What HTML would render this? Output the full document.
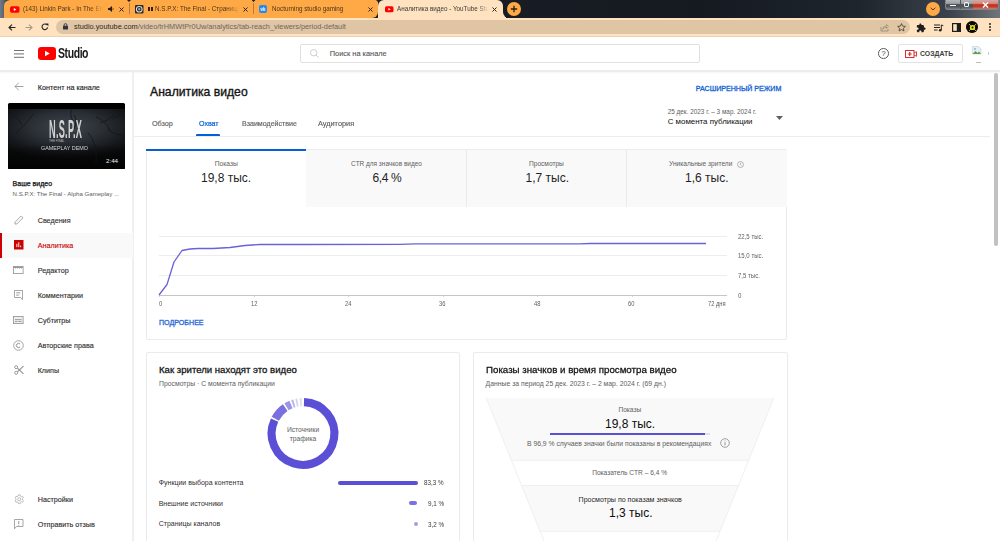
<!DOCTYPE html>
<html><head><meta charset="utf-8">
<style>
*{box-sizing:border-box;margin:0;padding:0}
html,body{width:1000px;height:541px;overflow:hidden;background:#fff;font-family:"Liberation Sans",sans-serif;color:#0d0d0d}
.a{position:absolute}
.t{position:absolute;white-space:nowrap;line-height:1}
svg{position:absolute;overflow:visible}
.tabt{position:absolute;top:4px;font-size:7.2px;color:#4a3518;white-space:nowrap;line-height:9px;height:11px;overflow:hidden;transform:scaleX(.875);transform-origin:0 0}
.nav{position:absolute;left:37.7px;font-size:7.2px;font-weight:normal;color:#2e2e2e;-webkit-text-stroke:.12px #2e2e2e;white-space:nowrap;line-height:1}
.card{position:absolute;background:#fff;border:1px solid #ebebeb;border-radius:2px}
.g{color:#606060}
</style></head><body>
<!-- ============ TAB STRIP ============ -->
<div class="a" style="left:0;top:0;width:1000px;height:18px;background:linear-gradient(90deg,#6f7884 0px,#5a636e 4px,#252b33 8px,#1b2028 300px,#151a21 700px,#1f252d 860px,#3b424b 950px,#6f757c 1000px)"></div>
<div class="a" style="left:4px;top:0;width:374px;height:18px;background:#fea946;border-radius:6px 0 6px 0"></div>
<!-- separators / notches -->
<div class="a" style="left:128.5px;top:3px;width:1px;height:11px;background:#b87a35"></div>
<div class="a" style="left:253px;top:3px;width:1px;height:11px;background:#b87a35"></div>
<div class="a" style="left:127px;top:0;width:4px;height:2px;background:#1b2028;clip-path:polygon(0 0,100% 0,50% 100%)"></div>
<div class="a" style="left:251.5px;top:0;width:4px;height:2px;background:#1b2028;clip-path:polygon(0 0,100% 0,50% 100%)"></div>
<div class="a" style="left:376px;top:0;width:4px;height:2px;background:#1b2028;clip-path:polygon(0 0,100% 0,50% 100%)"></div>
<!-- active tab -->
<div class="a" style="left:378px;top:0;width:125px;height:18px;background:#ffe2bf;border-radius:6px 6px 0 0"></div>
<div class="a" style="left:500px;top:12px;width:6px;height:6px;background:#ffe2bf"></div>
<div class="a" style="left:503px;top:6px;width:8px;height:12px;background:#171c23;border-radius:0 0 0 6px"></div>
<!-- tab 1 -->
<svg style="left:10px;top:5.5px" width="9.5" height="7" viewBox="0 0 10 7"><rect width="10" height="7" rx="1.8" fill="#f00"/><path d="M4 2 L6.8 3.5 L4 5Z" fill="#fff"/></svg>
<div class="tabt" style="left:23px;width:92px;-webkit-mask-image:linear-gradient(90deg,#000 82%,transparent)">(143) Linkin Park - In The End</div>
<svg style="left:107.5px;top:6px" width="6" height="6" viewBox="0 0 6 6"><path d="M0 2h1.5L4 0v6L1.5 4H0z" fill="#2b2118"/><path d="M4.8 1.8q.8 1.2 0 2.4" stroke="#2b2118" stroke-width=".6" fill="none"/></svg>
<svg style="left:118.5px;top:6.5px" width="5" height="5" viewBox="0 0 5 5"><path d="M.5 .5l4 4M4.5 .5l-4 4" stroke="#2b2118" stroke-width="1"/></svg>
<!-- tab 2 -->
<svg style="left:135px;top:4.5px" width="8.5" height="8.5" viewBox="0 0 9 9"><rect width="9" height="9" rx="1" fill="#2a2a2a"/><circle cx="4.5" cy="4.5" r="3" fill="none" stroke="#ddd" stroke-width="1.1"/><circle cx="4.5" cy="4.5" r="1.2" fill="#aaa"/></svg>
<div class="a" style="left:148px;top:6.5px;width:1.8px;height:4.5px;background:#2e2214"></div>
<div class="a" style="left:151px;top:6.5px;width:1.8px;height:4.5px;background:#2e2214"></div>
<div class="tabt" style="left:154.5px;width:96px;-webkit-mask-image:linear-gradient(90deg,#000 85%,transparent)">N.S.P.X: The Final - Страница</div>
<svg style="left:243px;top:6.5px" width="5" height="5" viewBox="0 0 5 5"><path d="M.5 .5l4 4M4.5 .5l-4 4" stroke="#2b2118" stroke-width="1"/></svg>
<!-- tab 3 -->
<svg style="left:259px;top:5px" width="8" height="8" viewBox="0 0 8 8"><rect width="8" height="8" rx="2" fill="#2787f5"/><text x="1.2" y="5.8" font-size="4.5" font-weight="bold" fill="#fff" font-family="Liberation Sans">vk</text></svg>
<div class="tabt" style="left:272px;">Nocturning studio gaming</div>
<svg style="left:368px;top:6.5px" width="5" height="5" viewBox="0 0 5 5"><path d="M.5 .5l4 4M4.5 .5l-4 4" stroke="#2b2118" stroke-width="1"/></svg>
<!-- active tab content -->
<svg style="left:384.5px;top:5.5px" width="8.5" height="6.5" viewBox="0 0 10 7"><rect width="10" height="7" rx="1.8" fill="#f00"/><path d="M4 2 L6.8 3.5 L4 5Z" fill="#fff"/></svg>
<div class="tabt" style="left:396.5px;width:105px;-webkit-mask-image:linear-gradient(90deg,#000 88%,transparent);color:#3a3a3a">Аналитика видео - YouTube Studio</div>
<svg style="left:492px;top:6.5px" width="5" height="5" viewBox="0 0 5 5"><path d="M.5 .5l4 4M4.5 .5l-4 4" stroke="#2b2b2b" stroke-width="1"/></svg>
<!-- new tab -->
<div class="a" style="left:507px;top:2px;width:14px;height:14px;border-radius:50%;background:#fea946"></div>
<svg style="left:510px;top:5px" width="8" height="8" viewBox="0 0 8 8"><path d="M4 .8v6.4M.8 4h6.4" stroke="#2b2118" stroke-width="1.3"/></svg>
<!-- extension chevron -->
<div class="a" style="left:925.5px;top:1.5px;width:14.5px;height:14.5px;border-radius:50%;background:#fea946"></div>
<svg style="left:929.5px;top:6.5px" width="6" height="4" viewBox="0 0 6 4"><path d="M.7 .7L3 3l2.3-2.3" stroke="#3b2a12" stroke-width=".9" fill="none"/></svg>
<!-- window controls -->
<div class="a" style="left:944.5px;top:0;width:54px;height:9.8px;border-radius:0 0 3px 3px;background:linear-gradient(180deg,#b4b6b9 0%,#9c9fa3 38%,#474c52 52%,#50555b 75%,#777b80 100%);border:.8px solid #80858a;border-top:0"></div>
<div class="a" style="left:973px;top:0;width:25px;height:9.2px;border-radius:0 0 3px 0;background:linear-gradient(180deg,#d4aaa4 0%,#cf8a80 38%,#c8321e 52%,#c53a24 75%,#c88078 100%)"></div>
<div class="a" style="left:959.5px;top:0;width:1px;height:9px;background:#50555b"></div>
<div class="a" style="left:950px;top:4.6px;width:5.5px;height:1.6px;background:#fff"></div>
<div class="a" style="left:963.5px;top:2.3px;width:5px;height:4.6px;border:1px solid #eee;border-radius:1px"></div>
<svg style="left:982px;top:1.5px" width="7" height="6" viewBox="0 0 7 6"><path d="M1 .5l5 5M6 .5l-5 5" stroke="#fff" stroke-width="1.5"/></svg>

<!-- ============ TOOLBAR ============ -->
<div class="a" style="left:0;top:17.5px;width:1000px;height:19px;background:#ffe2bf"></div>
<div class="a" style="left:0;top:36px;width:1000px;height:1px;background:#ecd2b3"></div>
<svg style="left:8px;top:23.5px" width="8" height="7" viewBox="0 0 8 7"><path d="M7.5 3.5H1.2M4 .6L1 3.5 4 6.4" stroke="#222" stroke-width="1.1" fill="none"/></svg>
<svg style="left:24.5px;top:23.5px" width="8" height="7" viewBox="0 0 8 7"><path d="M.5 3.5h6.3M4 .6l3 2.9L4 6.4" stroke="#a89a88" stroke-width="1.1" fill="none"/></svg>
<svg style="left:40.5px;top:23px" width="8" height="8" viewBox="0 0 8 8"><path d="M6.6 4.4A2.8 2.8 0 1 1 5.8 1.8" stroke="#222" stroke-width="1.1" fill="none"/><path d="M4.6 .4H7.4V3.2Z" fill="#222"/></svg>
<div class="a" style="left:56px;top:19.7px;width:854px;height:14.3px;border-radius:7.2px;background:#dfc5a4"></div>
<svg style="left:62.8px;top:23.3px" width="5" height="6.5" viewBox="0 0 5 6.5"><path d="M1.1 3V2a1.4 1.4 0 0 1 2.8 0v1" stroke="#2f3440" stroke-width=".9" fill="none"/><rect x="0" y="2.8" width="5" height="3.7" rx=".5" fill="#2f3440"/></svg>
<div class="t" style="left:74px;top:23.3px;font-size:7.35px;color:#2d2822">studio.youtube.com<span style="color:#6f655b">/video/trHMWtPr0Uw/analytics/tab-reach_viewers/period-default</span></div>
<!-- toolbar right icons -->
<svg style="left:880px;top:22.5px" width="9" height="9" viewBox="0 0 9 9"><path d="M1 4v4h7V6" stroke="#9c8f7f" stroke-width=".9" fill="none"/><path d="M2.5 6.5Q3 3 6.5 3V1.5L8.5 3.5 6.5 5.5V4Q4 4 2.5 6.5Z" stroke="#9c8f7f" stroke-width=".8" fill="none"/></svg>
<svg style="left:897px;top:22.5px" width="9" height="9" viewBox="0 0 9 9"><path d="M4.5 .6l1.15 2.5 2.75.3-2.05 1.85.6 2.7L4.5 6.55 2.1 7.95l.6-2.7L.65 3.4l2.75-.3z" stroke="#4a4038" stroke-width=".85" fill="none"/></svg>
<svg style="left:916px;top:22.5px" width="10" height="10" viewBox="0 0 24 24"><path d="M20.5 11H19V7c0-1.1-.9-2-2-2h-4V3.5C13 2.12 11.88 1 10.5 1S8 2.12 8 3.5V5H4c-1.1 0-1.99.9-1.99 2v3.8H3.5c1.49 0 2.7 1.21 2.7 2.7s-1.21 2.7-2.7 2.7H2V20c0 1.1.9 2 2 2h3.8v-1.5c0-1.490 1.21-2.7 2.7-2.7 1.49 0 2.7 1.21 2.7 2.7V22H17c1.1 0 2-.9 2-2v-4h1.5c1.38 0 2.5-1.120 2.5-2.5S21.88 11 20.5 11z" fill="#1e1e1e"/></svg>
<svg style="left:934px;top:23.5px" width="10" height="8" viewBox="0 0 10 8"><path d="M0 1h6M0 3.5h6M0 6h3.5" stroke="#222" stroke-width="1"/><path d="M7.3 1v5" stroke="#222" stroke-width="1"/><circle cx="6.2" cy="6.3" r="1.3" fill="#222"/><path d="M7.3 1l2 .6" stroke="#222" stroke-width="1"/></svg>
<svg style="left:951.5px;top:22.8px" width="9" height="9" viewBox="0 0 9 9"><rect x=".6" y=".6" width="7.8" height="7.8" stroke="#1e1e1e" stroke-width="1.2" fill="none"/><rect x="4.8" y=".6" width="3.6" height="7.8" fill="#1e1e1e"/></svg>
<div class="a" style="left:966.2px;top:21.3px;width:11.5px;height:11.5px;border-radius:50%;background:#0a0a0a"></div>
<svg style="left:967.5px;top:22.6px" width="9" height="9" viewBox="0 0 9 9"><circle cx="4.5" cy="4.5" r="2.6" fill="#e5e51a"/><path d="M1 1l2 2M8 1L6 3M1 8l2-2M8 8L6 6" stroke="#e5e51a" stroke-width=".8"/><circle cx="4.5" cy="4.5" r="1" fill="#0a0a0a"/></svg>
<div class="a" style="left:988.5px;top:23px;width:2px;height:2px;border-radius:50%;background:#222;box-shadow:0 3px 0 #222,0 6px 0 #222"></div>

<!-- ============ YT HEADER ============ -->
<div class="a" style="left:0;top:70px;width:1000px;height:2px;background:#ececec"></div>
<div class="a" style="left:0;top:72px;width:1000px;height:1.5px;background:linear-gradient(#f6f6f6,#fff)"></div>
<div class="a" style="left:14px;top:49.5px;width:9.5px;height:.9px;background:#707070;box-shadow:0 3.4px 0 #707070,0 6.8px 0 #707070"></div>
<svg style="left:37.5px;top:47px" width="18" height="13" viewBox="0 0 18 13"><rect width="18" height="13" rx="3.2" fill="#f00"/><path d="M7 3.8L11.8 6.5 7 9.2Z" fill="#fff"/></svg>
<div class="t" style="left:58px;top:45.3px;font-size:15.2px;font-weight:bold;color:#1a1a1a;letter-spacing:-.6px;transform:scaleX(.69);transform-origin:0 0">Studio</div>
<div class="a" style="left:300px;top:44px;width:400px;height:19px;border:1px solid #e0e0e0;border-radius:2px"></div>
<svg style="left:310px;top:48.5px" width="9" height="9" viewBox="0 0 9 9"><circle cx="3.7" cy="3.7" r="3.2" stroke="#c8c8c8" stroke-width=".9" fill="none"/><path d="M6 6L8.6 8.6" stroke="#c8c8c8" stroke-width=".9"/></svg>
<div class="t" style="left:329.8px;top:50px;font-size:7.4px;color:#555;-webkit-text-stroke:.1px #555">Поиск на канале</div>
<div class="a" style="left:878.3px;top:48px;width:10.8px;height:10.8px;border:.8px solid #5a5a5a;border-radius:50%"></div>
<div class="t" style="left:881.2px;top:49.6px;font-size:8px;color:#444">?</div>
<div class="a" style="left:898.3px;top:44px;width:64.3px;height:18.7px;border:1px solid #e3e3e3;border-radius:2px"></div>
<svg style="left:904.5px;top:49.5px" width="12" height="8" viewBox="0 0 12 8"><rect x=".5" y=".5" width="8.5" height="7" stroke="#d92d2d" stroke-width="1" fill="none"/><path d="M9 3l2.5-1.3v4.6L9 5" stroke="#d92d2d" stroke-width=".9" fill="none"/><path d="M4.75 2v4M2.75 4h4" stroke="#d92d2d" stroke-width="1.2"/></svg>
<div class="t" style="left:920px;top:50.6px;font-size:6.9px;font-weight:bold;color:#3e3e3e">СОЗДАТЬ</div>
<!-- broken avatar -->
<svg style="left:971px;top:45px" width="12" height="13" viewBox="0 0 12 13"><path d="M1.5 1.5h6l2.5 2.5v5H1.5z" fill="#e8eef5" stroke="#b8c4d0" stroke-width=".5"/><path d="M1.5 9l3-3 2 2 1.5-1.5L10 9z" fill="#5aa04a"/><circle cx="4" cy="4" r="1.1" fill="#9ab7d6"/></svg>
<div class="a" style="left:976px;top:61.5px;width:5px;height:.8px;background:#bbb"></div>
<div class="a" style="left:987.5px;top:52px;width:.8px;height:3px;background:#ccc"></div>

<!-- ============ SIDEBAR ============ -->
<div class="a" style="left:132.2px;top:72px;width:1.8px;height:470px;background:#f0f0f0"></div>
<svg style="left:14px;top:82px" width="10" height="9" viewBox="0 0 10 9"><path d="M9.5 4.5H1M4.8.7L1 4.5l3.8 3.8" stroke="#8a8a8a" stroke-width=".8" fill="none"/></svg>
<div class="nav" style="left:37.8px;top:83.8px;font-size:7.2px;color:#1f1f1f;-webkit-text-stroke:.15px #1f1f1f">Контент на канале</div>
<!-- thumbnail -->
<div class="a" style="left:8.2px;top:103.4px;width:117px;height:66px;background:#000;border-radius:1.5px;overflow:hidden">
  <div class="a" style="left:0;top:5.5px;width:117px;height:60.5px;background:radial-gradient(ellipse 70% 55% at 50% 30%,#3d444b 0%,#2a2f35 45%,#141619 80%,#0b0c0d 100%)"></div>
  <div class="a" style="left:0;top:42px;width:117px;height:24px;background:linear-gradient(rgba(0,0,0,0),rgba(0,0,0,.6))"></div>
  <svg style="left:0;top:0" width="117" height="66" viewBox="0 0 117 66"><path d="M64 6q-3 6 1 12M66 12q4 6 0 14M88 14q10 4 14 14M92 20q8-2 14-8M100 26q6 6 16 6M104 16l12-6M8 30q10-8 18-20M14 22q-4-8-10-10M80 30q10 10 8 30" stroke="#15181b" stroke-width=".9" fill="none"/><path d="M0 40h117v26H0z" fill="url(#tg)"/><defs><linearGradient id="tg" x1="0" y1="0" x2="0" y2="1"><stop offset="0" stop-color="#000" stop-opacity="0"/><stop offset="1" stop-color="#000" stop-opacity=".5"/></linearGradient></defs></svg>
  <div class="t" style="left:40.6px;top:13.5px;font-size:25px;font-weight:bold;color:#d0d0d0;letter-spacing:.6px;transform:scaleX(.37);transform-origin:0 0">N.S.P.X</div>
  <div class="t" style="left:40.8px;top:36.3px;font-size:3px;color:#b8b8b8">THE FINAL</div>
  <div class="t" style="left:32.8px;top:42.6px;font-size:5.9px;color:#d6d6d6;transform:scaleX(.92);transform-origin:0 0">GAMEPLAY DEMO</div>
  <div class="t" style="left:97.8px;top:54.8px;font-size:6.2px;color:#f0f0f0">2:44</div>
</div>
<div class="nav" style="left:12.6px;top:179.5px;font-size:7px;color:#0f0f0f;-webkit-text-stroke:.25px #0f0f0f">Ваше видео</div>
<div class="t g" style="left:12.6px;top:191.3px;font-size:6.1px">N.S.P.X: The Final - Alpha Gameplay ...</div>
<!-- nav items -->
<div class="a" style="left:0;top:232.5px;width:133px;height:25px;background:#f9f9f9"></div>
<div class="a" style="left:0;top:232.5px;width:2.4px;height:25px;background:#cc0000"></div>
<svg style="left:13.5px;top:214.5px" width="10" height="10" viewBox="0 0 10 10"><path d="M1 9V7.2L7.2 1 9 2.8 2.8 9z" stroke="#909090" stroke-width=".8" fill="none"/></svg>
<div class="nav" style="top:216.6px">Сведения</div>
<svg style="left:14px;top:240px" width="9.5" height="9.5" viewBox="0 0 10 10"><rect width="10" height="10" fill="#cc0000"/><path d="M3 4v3.5M5 2.5v5M7 6v1.5" stroke="#fff" stroke-width="1"/></svg>
<div class="nav" style="top:241.9px;color:#cc0000;-webkit-text-stroke:.12px #cc0000">Аналитика</div>
<svg style="left:13.4px;top:265.5px" width="10.5" height="8" viewBox="0 0 10.5 8"><rect x=".4" y=".4" width="9.7" height="7.2" stroke="#909090" stroke-width=".8" fill="none"/><path d="M.8 1.3h9" stroke="#909090" stroke-width="1.2"/><path d="M2.5 1.5v1.2M4.5 1.5v1.2M6.5 1.5v1.2M8.5 1.5v1.2" stroke="#909090" stroke-width=".6"/></svg>
<div class="nav" style="top:266.6px">Редактор</div>
<svg style="left:14px;top:290px" width="9" height="10" viewBox="0 0 9 10"><path d="M.5.5h8v9.2L6.8 7.5H.5z" stroke="#909090" stroke-width=".8" fill="none"/><path d="M2.2 2.5h4M2.2 4h4M2.2 5.5h2.5" stroke="#909090" stroke-width=".6"/></svg>
<div class="nav" style="top:291.6px">Комментарии</div>
<svg style="left:13.4px;top:316px" width="10.5" height="8" viewBox="0 0 10.5 8"><rect x=".4" y=".4" width="9.7" height="7.2" stroke="#909090" stroke-width=".8" fill="#eeeeee"/><path d="M2 3.6h6.5M2 5.5h2.5M5.3 5.5h3.2" stroke="#8a8a8a" stroke-width=".8"/></svg>
<div class="nav" style="top:316.6px">Субтитры</div>
<svg style="left:13px;top:339.5px" width="11" height="11" viewBox="0 0 11 11"><circle cx="5.5" cy="5.5" r="4.8" stroke="#909090" stroke-width=".8" fill="none"/><path d="M7.1 4.1A2.1 2.1 0 1 0 7.1 6.9" stroke="#808080" stroke-width=".9" fill="none"/></svg>
<div class="nav" style="top:341.6px">Авторские права</div>
<svg style="left:13.5px;top:365px" width="10" height="10" viewBox="0 0 10 10"><circle cx="2.2" cy="2.2" r="1.5" stroke="#909090" stroke-width=".9" fill="none"/><circle cx="2.2" cy="7.8" r="1.5" stroke="#909090" stroke-width=".9" fill="none"/><path d="M3.4 3.2L9.5 8.8M3.4 6.8L9.5 1.2" stroke="#909090" stroke-width="1.1"/></svg>
<div class="nav" style="top:366.6px">Клипы</div>
<svg style="left:13.5px;top:494px" width="10.5" height="10.5" viewBox="0 0 24 24"><path d="M12 8.5a3.5 3.5 0 1 0 0 7 3.5 3.5 0 0 0 0-7zM10 2h4l.6 2.8 2.2 1.3 2.7-.9 2 3.5-2.1 1.9v2.8l2.1 1.9-2 3.5-2.7-.9-2.2 1.3L14 22h-4l-.6-2.8-2.2-1.3-2.7.9-2-3.5 2.1-1.9V10.6L2.5 8.7l2-3.5 2.7.9 2.2-1.3z" stroke="#909090" stroke-width="1.3" fill="none"/></svg>
<div class="nav" style="top:495.6px">Настройки</div>
<svg style="left:14px;top:518.5px" width="9.5" height="10.5" viewBox="0 0 9.5 10.5"><path d="M.5.5h8.5v7H2.5L.5 9.8z" stroke="#909090" stroke-width=".8" fill="none"/><path d="M4.75 2v3M4.75 5.8v.9" stroke="#909090" stroke-width=".9"/></svg>
<div class="nav" style="top:520.6px">Отправить отзыв</div>

<!-- scrollbar -->
<div class="a" style="left:994px;top:72.5px;width:4px;height:173px;border-radius:2px;background:#c1c1c1"></div>

<!-- ============ MAIN CONTENT ============ -->
<div class="t" style="left:150px;top:85.8px;font-size:12.2px;color:#141414;-webkit-text-stroke:.35px #141414">Аналитика видео</div>
<div class="t" style="left:695.7px;top:85.6px;font-size:7.1px;color:#1463d4;-webkit-text-stroke:.3px #1463d4">РАСШИРЕННЫЙ РЕЖИМ</div>
<div class="t g" style="left:152px;top:119.5px;font-size:7.2px;-webkit-text-stroke:.15px #606060">Обзор</div>
<div class="t" style="left:198.6px;top:119.5px;font-size:7.2px;color:#065fd4;-webkit-text-stroke:.2px #065fd4;transform:scaleX(.98);transform-origin:0 0">Охват</div>
<div class="t g" style="left:241.9px;top:119.5px;font-size:7.2px;-webkit-text-stroke:.15px #606060;transform:scaleX(.985);transform-origin:0 0">Взаимодействие</div>
<div class="t g" style="left:317.8px;top:119.5px;font-size:7.2px;-webkit-text-stroke:.15px #606060;transform:scaleX(1.02);transform-origin:0 0">Аудитория</div>
<div class="a" style="left:195.9px;top:133.7px;width:24.6px;height:2px;background:#065fd4;border-radius:1px 1px 0 0"></div>
<div class="a" style="left:134px;top:135.8px;width:856px;height:1px;background:#ececec"></div>
<div class="t g" style="left:667.7px;top:108.8px;font-size:6.4px">25 дек. 2023 г. – 3 мар. 2024 г.</div>
<div class="t" style="left:667.7px;top:117.8px;font-size:7.9px;color:#0d0d0d">С момента публикации</div>
<svg style="left:776px;top:115.5px" width="7" height="4" viewBox="0 0 7 4"><path d="M0 0h7L3.5 4z" fill="#606060"/></svg>

<!-- metrics card -->
<div class="card" style="left:145.7px;top:149px;width:641.8px;height:190.5px"></div>
<div class="a" style="left:306px;top:150px;width:480.8px;height:56.6px;background:#f9f9f9;border-radius:0 1.5px 0 0"></div>
<div class="a" style="left:466px;top:149px;width:1px;height:57.6px;background:#ebebeb"></div>
<div class="a" style="left:626px;top:149px;width:1px;height:57.6px;background:#ebebeb"></div>
<div class="a" style="left:146.3px;top:149px;width:160px;height:2px;background:#065fd4"></div>
<div class="t g" style="left:214.7px;top:160.8px;font-size:6.7px">Показы</div>
<div class="t" style="left:201px;top:172.4px;font-size:12px;color:#1f1f1f">19,8 тыс.</div>
<div class="t g" style="left:351px;top:160.8px;font-size:6.46px">CTR для значков видео</div>
<div class="t" style="left:372.6px;top:172.4px;font-size:12px;color:#1f1f1f;letter-spacing:-.4px">6,4 %</div>
<div class="t g" style="left:529px;top:160.8px;font-size:6.6px">Просмотры</div>
<div class="t" style="left:525.5px;top:172.4px;font-size:12px;color:#1f1f1f">1,7 тыс.</div>
<div class="t g" style="left:669px;top:160.8px;font-size:6.6px">Уникальные зрители</div>
<svg style="left:736.5px;top:161px" width="7" height="7" viewBox="0 0 7 7"><circle cx="3.5" cy="3.5" r="3" stroke="#888" stroke-width=".6" fill="none"/><path d="M3.5 1.8v1.9l1.2.8" stroke="#888" stroke-width=".6" fill="none"/></svg>
<div class="t" style="left:685px;top:172.4px;font-size:12px;color:#1f1f1f">1,6 тыс.</div>

<!-- chart -->
<div class="a" style="left:159px;top:235.5px;width:568px;height:1px;background:#ededed"></div>
<div class="a" style="left:159px;top:255px;width:568px;height:1px;background:#ededed"></div>
<div class="a" style="left:159px;top:275px;width:568px;height:1px;background:#ededed"></div>
<div class="a" style="left:159px;top:294.5px;width:568px;height:1px;background:#c6c6c6"></div>
<svg style="left:0;top:0" width="1000" height="541" viewBox="0 0 1000 541"><polyline fill="none" stroke="#6b61dc" stroke-width="1.3" stroke-linejoin="round" points="159,295 167,284.5 174,262 182,250.5 190,249 198,248.5 213,248.5 230,247.5 245,245.5 260,244.5 280,244.5 300,244.5 400,244.3 415,243.8 500,243.8 580,243.8 590,243.5 706,243.5"/></svg>
<div class="t g" style="left:737.7px;top:232.6px;font-size:7px;transform:scaleX(.86);transform-origin:0 0">22,5 тыс.</div>
<div class="t g" style="left:737.7px;top:252.3px;font-size:7px;transform:scaleX(.86);transform-origin:0 0">15,0 тыс.</div>
<div class="t g" style="left:737.7px;top:271.8px;font-size:7px;transform:scaleX(.86);transform-origin:0 0">7,5 тыс.</div>
<div class="t g" style="left:737.7px;top:291.6px;font-size:7px;transform:scaleX(.86);transform-origin:0 0">0</div>
<div class="t g" style="left:159px;top:300.3px;font-size:7px;transform:scaleX(.82);transform-origin:0 0">0</div>
<div class="t g" style="left:250.5px;top:300.3px;font-size:7px;transform:scaleX(.82);transform-origin:0 0">12</div>
<div class="t g" style="left:344.5px;top:300.3px;font-size:7px;transform:scaleX(.82);transform-origin:0 0">24</div>
<div class="t g" style="left:439px;top:300.3px;font-size:7px;transform:scaleX(.82);transform-origin:0 0">36</div>
<div class="t g" style="left:533.5px;top:300.3px;font-size:7px;transform:scaleX(.82);transform-origin:0 0">48</div>
<div class="t g" style="left:628px;top:300.3px;font-size:7px;transform:scaleX(.82);transform-origin:0 0">60</div>
<div class="t g" style="left:708px;top:300.3px;font-size:7px;transform:scaleX(.82);transform-origin:0 0">72 дня</div>
<div class="a" style="left:159px;top:295.5px;width:.8px;height:1.5px;background:#d6d6d6"></div><div class="a" style="left:253.5px;top:295.5px;width:.8px;height:1.5px;background:#d6d6d6"></div><div class="a" style="left:348px;top:295.5px;width:.8px;height:1.5px;background:#d6d6d6"></div><div class="a" style="left:442.5px;top:295.5px;width:.8px;height:1.5px;background:#d6d6d6"></div><div class="a" style="left:537px;top:295.5px;width:.8px;height:1.5px;background:#d6d6d6"></div><div class="a" style="left:631.5px;top:295.5px;width:.8px;height:1.5px;background:#d6d6d6"></div>
<div class="t" style="left:159px;top:319.8px;font-size:7.1px;color:#1f68d6;-webkit-text-stroke:.3px #1f68d6">ПОДРОБНЕЕ</div>

<!-- traffic card -->
<div class="card" style="left:145.7px;top:351.8px;width:314.8px;height:200px"></div>
<div class="t" style="left:159px;top:365.3px;font-size:9.6px;color:#141414;-webkit-text-stroke:.28px #141414">Как зрители находят это видео</div>
<div class="t g" style="left:159px;top:380.5px;font-size:6.85px">Просмотры · С момента публикации</div>
<svg style="left:0;top:0" width="1000" height="541" viewBox="0 0 1000 541">
<g transform="translate(303,433.5)" fill="none" stroke-width="8.1"><path d="M0.99 -31.38A31.4 31.4 0 1 1 -28.41 -13.37" stroke="#5b4fd6"/><path d="M-27.72 -14.74A31.4 31.4 0 0 1 -17.79 -25.88" stroke="#7970dd"/><path d="M-16.50 -26.72A31.4 31.4 0 0 1 -12.02 -29.01" stroke="#9b94e6"/><path d="M-10.48 -29.60A31.4 31.4 0 0 1 -8.66 -30.18" stroke="#b8b2ee"/><path d="M-6.80 -30.66A31.4 31.4 0 0 1 -5.18 -30.97" stroke="#d4d0f4"/><path d="M-3.01 -31.26A31.4 31.4 0 0 1 -1.21 -31.38" stroke="#e0e0e0"/></g></svg>
<div class="t g" style="left:286.9px;top:426px;font-size:6.7px;text-align:center;line-height:8.5px;width:32.3px"><div style="margin-left:0">Источники</div><div>трафика</div></div>
<div class="t" style="left:158.7px;top:478.8px;font-size:7px;color:#303030">Функции выбора контента</div>
<div class="a" style="left:337.5px;top:480.7px;width:80px;height:4px;border-radius:2px;background:#5b4fd6"></div>
<div class="t" style="left:423.7px;top:479.2px;font-size:7px;color:#3a3a3a;transform:scaleX(.9);transform-origin:0 0">83,3 %</div>
<div class="t" style="left:158.7px;top:499.7px;font-size:7px;color:#303030">Внешние источники</div>
<div class="a" style="left:408.8px;top:501.2px;width:8.7px;height:4px;border-radius:2px;background:#7b71e0"></div>
<div class="t" style="left:427.5px;top:499.5px;font-size:7px;color:#3a3a3a;transform:scaleX(.9);transform-origin:0 0">9,1 %</div>
<div class="t" style="left:158.7px;top:520.2px;font-size:7px;color:#303030">Страницы каналов</div>
<div class="a" style="left:413.6px;top:522.2px;width:4px;height:4px;border-radius:2px;background:#a39de9"></div>
<div class="t" style="left:427.5px;top:520.5px;font-size:7px;color:#3a3a3a;transform:scaleX(.9);transform-origin:0 0">3,2 %</div>

<!-- funnel card -->
<div class="card" style="left:473px;top:351.8px;width:314.5px;height:200px"></div>
<div class="t" style="left:485.6px;top:365.3px;font-size:9.6px;color:#141414;-webkit-text-stroke:.28px #141414;transform:scaleX(1.013);transform-origin:0 0">Показы значков и время просмотра видео</div>
<div class="t g" style="left:485.6px;top:380.5px;font-size:6.84px">Данные за период 25 дек. 2023 г. – 2 мар. 2024 г. (69 дн.)</div>
<svg style="left:0;top:0" width="1000" height="541" viewBox="0 0 1000 541">
<path d="M486.2 397.7H773.9L749 460.4H511Z" fill="#f9f9f9"/>
<path d="M511 460.4H749L738.6 485.6H521.4Z" fill="#fff"/>
<path d="M521.4 485.6H738.6L720.2 531.3H539.8Z" fill="#f9f9f9"/>
<path d="M539.8 531.3H720.2L716 541H544Z" fill="#fff"/>
<path d="M486.2 397.7L544 541M773.9 397.7L716 541" stroke="#ececec" stroke-width=".8" fill="none"/>
<path d="M511 460.4H749M521.4 485.6H738.6M539.8 531.3H720.2" stroke="#ececec" stroke-width=".8"/>
</svg>
<div class="t g" style="left:618.4px;top:407.2px;font-size:6.6px">Показы</div>
<div class="t" style="left:605px;top:417.5px;font-size:12px;color:#0d0d0d">19,8 тыс.</div>
<div class="a" style="left:549.7px;top:433.2px;width:160.3px;height:1.6px;background:#e0e0e0"></div>
<div class="a" style="left:549.7px;top:433.2px;width:155.7px;height:1.6px;background:#5b4fd6"></div>
<div class="t g" style="left:527px;top:440.6px;font-size:6.8px">В 96,9 % случаев значки были показаны в рекомендациях</div>
<svg style="left:719.5px;top:438px" width="10" height="10" viewBox="0 0 10 10"><circle cx="5" cy="5" r="4.3" stroke="#777" stroke-width=".7" fill="none"/><path d="M5 4.3v3M5 2.6v.8" stroke="#777" stroke-width=".8"/></svg>
<div class="t g" style="left:592.2px;top:469.8px;font-size:6.6px">Показатель CTR – 6,4 %</div>
<div class="t" style="left:578.6px;top:495.6px;font-size:7.07px;color:#282828">Просмотры по показам значков</div>
<div class="t" style="left:609px;top:507.3px;font-size:12px;color:#0d0d0d">1,3 тыс.</div>

</body></html>
